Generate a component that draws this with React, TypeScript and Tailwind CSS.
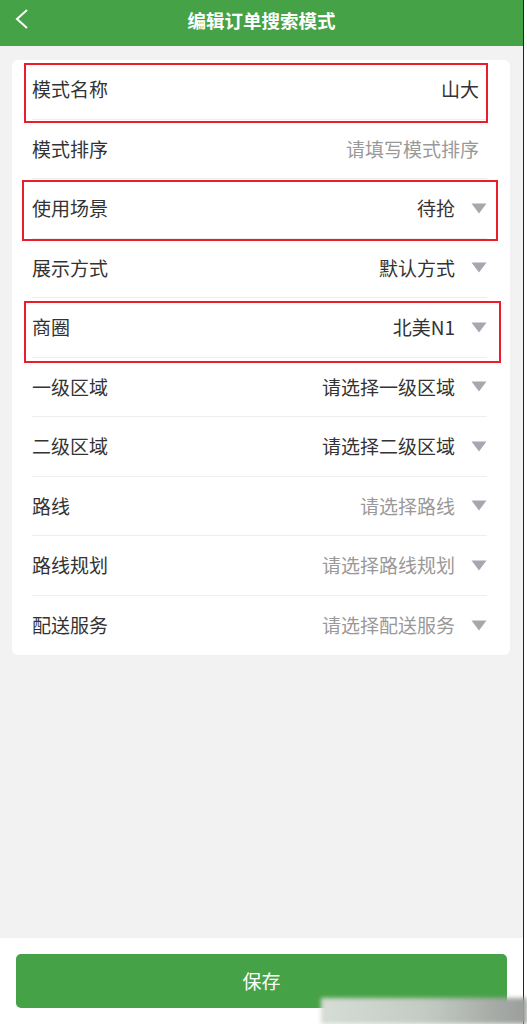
import React from "react";

type Row = {
  label: string;
  value: string;
  dark?: boolean;
  arrow?: boolean;
  mark?: string;
};

const rows: Row[] = [
  { label: "模式名称", value: "山大", dark: true, mark: "left-[12px] right-[22px] top-[3px] bottom-[-3.5px]" },
  { label: "模式排序", value: "请填写模式排序" },
  { label: "使用场景", value: "待抢", dark: true, arrow: true, mark: "left-[10px] right-[12px] top-[1px] bottom-[-2.5px]" },
  { label: "展示方式", value: "默认方式", dark: true, arrow: true },
  { label: "商圈", value: "北美N1", dark: true, arrow: true, mark: "left-[12px] right-[9px] top-[3px] bottom-[-5.5px]" },
  { label: "一级区域", value: "请选择一级区域", dark: true, arrow: true },
  { label: "二级区域", value: "请选择二级区域", dark: true, arrow: true },
  { label: "路线", value: "请选择路线", arrow: true },
  { label: "路线规划", value: "请选择路线规划", arrow: true },
  { label: "配送服务", value: "请选择配送服务", arrow: true },
];

function Caret() {
  return (
    <svg width="16" height="11" viewBox="0 0 16 11" className="ml-4 shrink-0">
      <path d="M0.5 0.5 H15.5 L8 10.5 Z" fill="#a7a8af" />
    </svg>
  );
}

function FormRow({ row, last }: { row: Row; last: boolean }) {
  return (
    <div className="relative h-[59.5px]">
      <div
        className={`mx-5 mr-[23px] flex h-full items-center justify-between ${
          last ? "" : "border-b border-[#eeeeee]"
        }`}
      >
        <span className="text-[19px] text-[#333333]">{row.label}</span>
        <div className={`flex items-center ${row.arrow ? "" : "mr-[8px]"}`}>
          <span className={`text-[19px] ${row.dark ? "text-[#333333]" : "text-[#999999]"}`}>
            {row.value}
          </span>
          {row.arrow && <Caret />}
        </div>
      </div>
      {row.mark && (
        <div className={`pointer-events-none absolute border-2 border-[#ec1c2c] ${row.mark}`} />
      )}
    </div>
  );
}

export default function App() {
  return (
    <div className="h-[1024px] w-[527px] bg-white" style={{ fontFamily: '"Noto Sans CJK SC", "Noto Sans", sans-serif' }}>
      <div className="relative flex h-full w-[524px] flex-col border-r border-[#222222] bg-[#f2f2f2]">
        <header className="relative flex h-[46px] shrink-0 items-center justify-center bg-[#46a246] pb-1">
          <button type="button" className="absolute left-[14px] top-[9px]">
            <svg width="16" height="20" viewBox="0 0 16 20">
              <path d="M13 1 L3 10 L13 19" fill="none" stroke="white" strokeWidth="2" />
            </svg>
          </button>
          <h1 className="text-[18.5px] font-bold text-white">编辑订单搜索模式</h1>
        </header>

        <main className="flex-1 px-3 pt-[14px]">
          <div className="mr-[1px] rounded-md bg-white">
            {rows.map((row, i) => (
              <FormRow key={row.label} row={row} last={i === rows.length - 1} />
            ))}
          </div>
        </main>

        <footer className="h-[86px] shrink-0 bg-white px-4 pt-[16px]">
          <button
            type="button"
            className="flex h-[54px] w-full items-center justify-center rounded-[5px] bg-[#46a246] text-[19px] text-white"
          >
            保存
          </button>
        </footer>

        <div className="pointer-events-none absolute bottom-0 right-[-4px] h-[26px] w-[206px] bg-gradient-to-r from-[#d6dcd6] via-[#c4cbc4] to-[#9a9d9a] blur-[2px]" />
      </div>
    </div>
  );
}
